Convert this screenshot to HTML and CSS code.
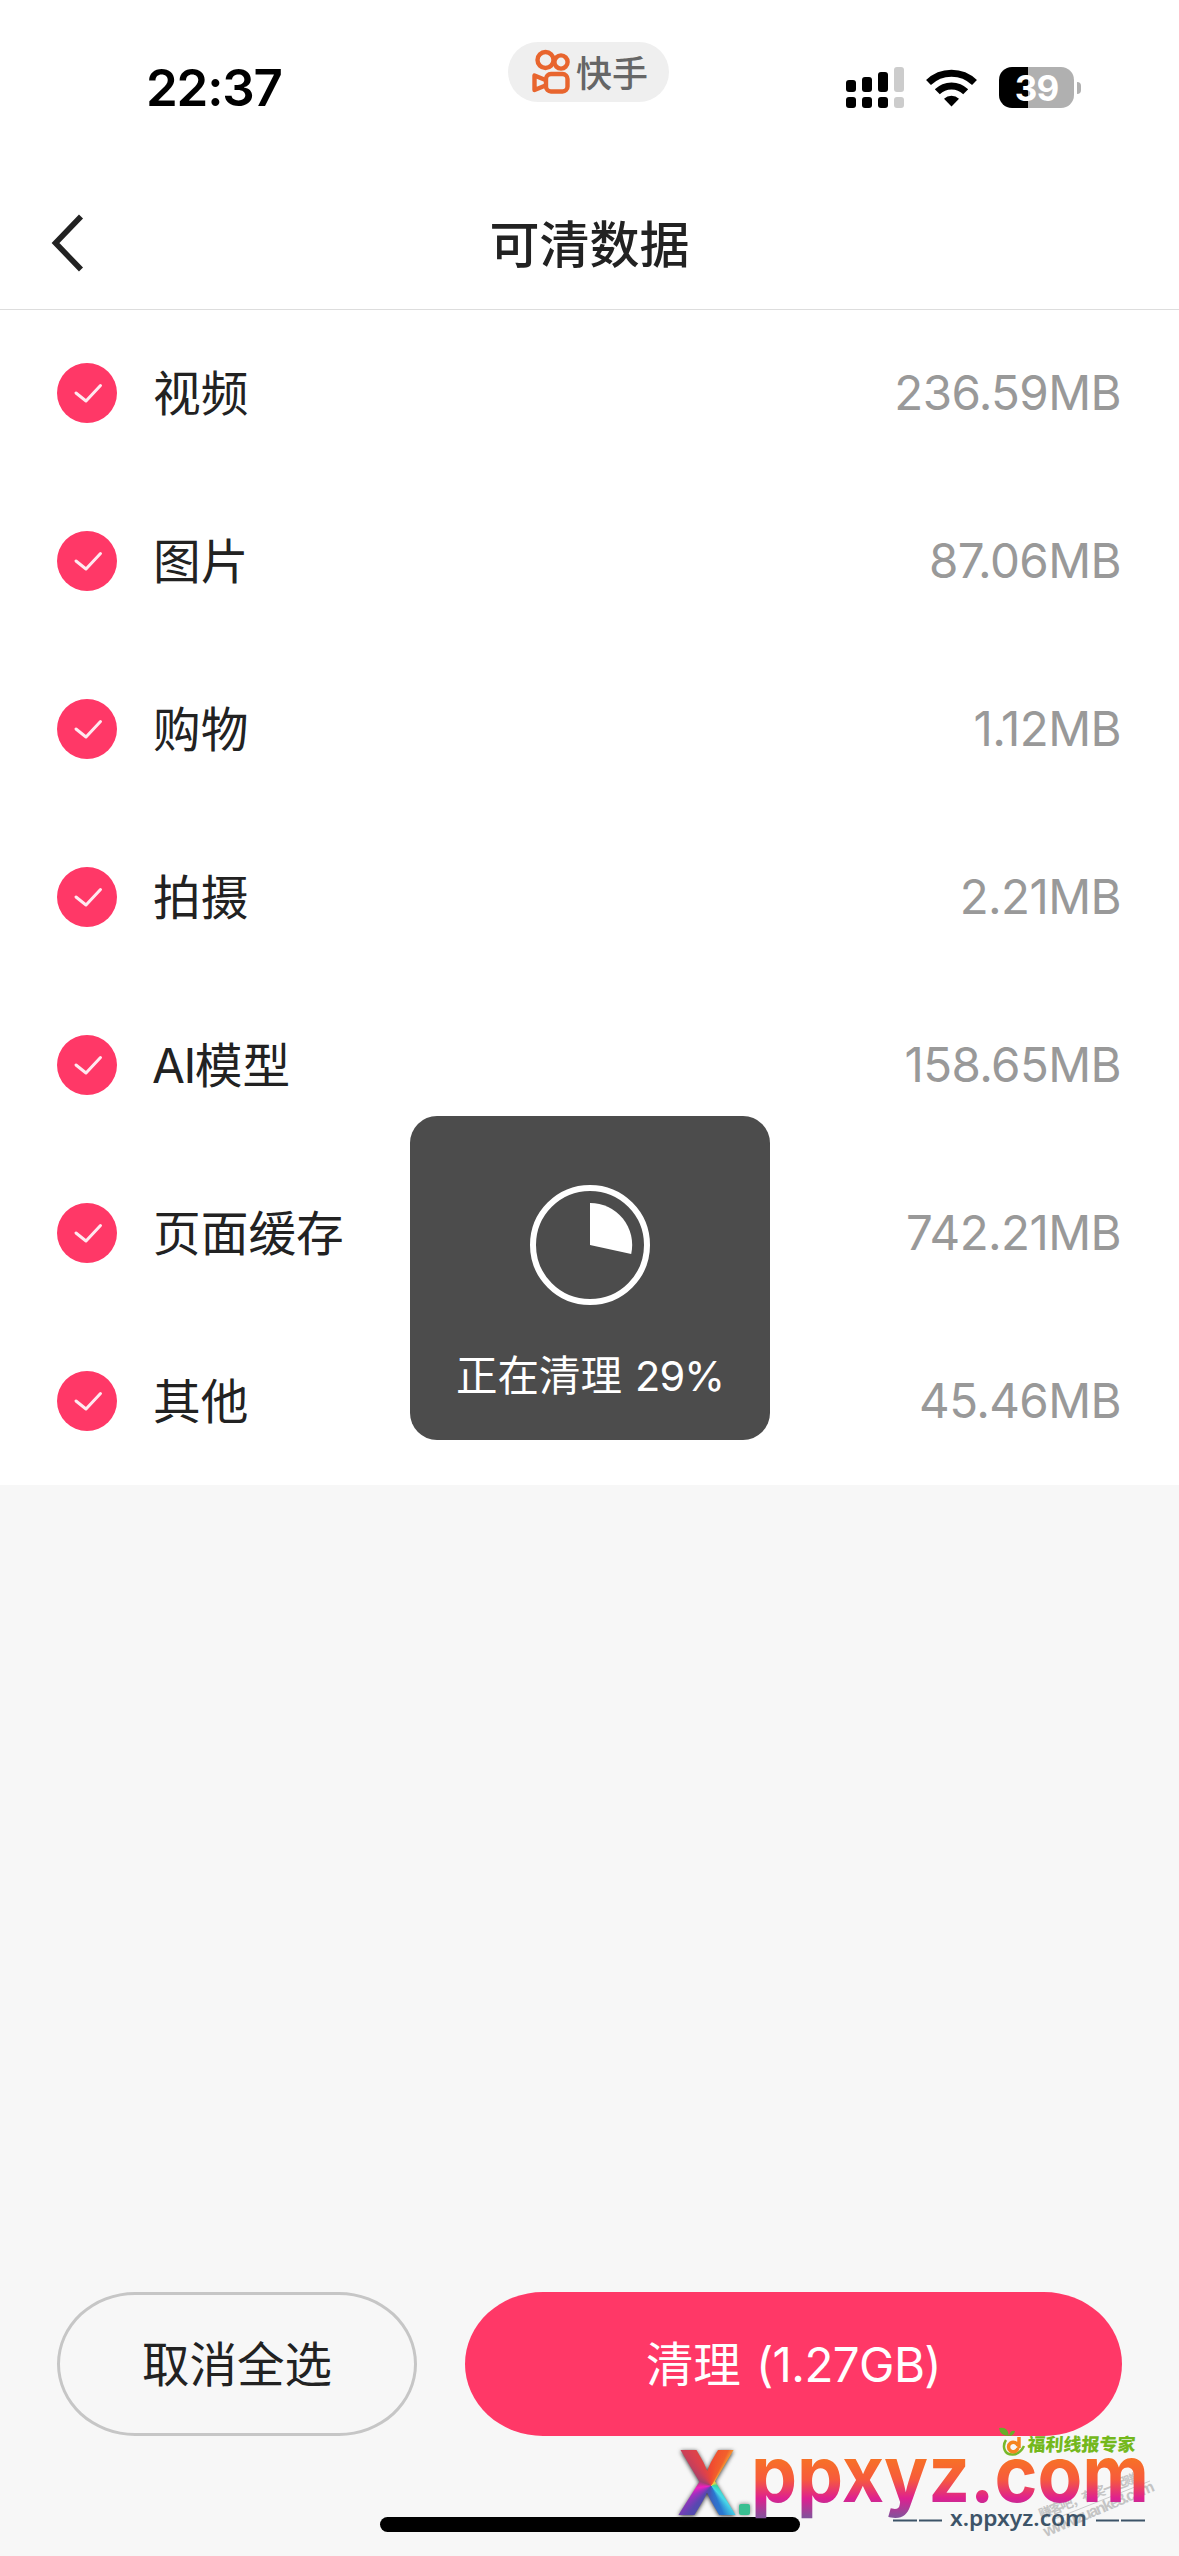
FILE: index.html
```html
<!DOCTYPE html>
<html lang="zh-CN">
<head>
<meta charset="utf-8">
<title>可清数据</title>
<link rel="stylesheet" href="styles.css">
</head>
<body>
<svg class="defs" width="0" height="0">
  <symbol id="check" viewBox="0 0 60 60"><circle cx="30" cy="30" r="30" fill="#ff3867"/><path d="M19 30 L29 38 L43.500 22.500" fill="none" stroke="#ffe9f0" stroke-width="3" stroke-linecap="round" stroke-linejoin="round"/></symbol>
</svg>
<div class="screen">
  <div class="status">
    <span class="time">22:37</span>
    <div class="pill">
      <svg class="pill-logo" width="40" height="46" viewBox="0 0 40 46" fill="none" stroke="#e8652e" stroke-width="4.400" stroke-linejoin="round">
        <circle cx="14.500" cy="11" r="8"/><circle cx="30" cy="13" r="6.600"/>
        <rect x="15" y="25" width="21.500" height="17.500" rx="5"/><path d="M14.500 31 L3.500 26.500 V41 L14.500 36.500"/>
      </svg>
      <span class="pill-text">快手</span>
    </div>
    <div class="indicators">
      <svg width="58" height="41" viewBox="0 0 58 41">
        <g fill="#000"><rect x="0" y="13" width="10" height="12" rx="3"/><rect x="16" y="10" width="10" height="15" rx="3"/><rect x="32" y="5" width="10" height="20" rx="3"/><rect x="0" y="30" width="10" height="11" rx="3"/><rect x="16" y="30" width="10" height="11" rx="3"/><rect x="32" y="30" width="10" height="11" rx="3"/></g>
        <g fill="#ccc"><rect x="48" y="0" width="10" height="25" rx="3"/><rect x="48" y="30" width="10" height="11" rx="3"/></g>
      </svg>
      <svg class="wifi" width="51" height="38" viewBox="0 0 51 38" fill="none" stroke="#000" stroke-width="7">
        <path d="M2.500 13.500 A33 33 0 0 1 48.500 13.500"/><path d="M11.300 22.800 A20 20 0 0 1 39.700 22.800"/>
        <path d="M25.500 37.500 L18 29.800 A11 11 0 0 1 33 29.800 Z" fill="#000" stroke="none"/>
      </svg>
      <div class="battery"><span class="battery-text">39</span></div>
      <i class="nub"></i>
    </div>
  </div>
  <div class="nav">
    <svg class="back" width="34" height="58" viewBox="0 0 34 58"><path d="M31 2.500 L5.500 29 L31 55.500" fill="none" stroke="#222" stroke-width="5.600"/></svg>
    <h1 class="title">可清数据</h1>
  </div>
  <div class="list">
    <div class="row"><svg class="check"><use href="#check"/></svg><span class="label">视频</span><span class="size">236.59MB</span></div>
    <div class="row"><svg class="check"><use href="#check"/></svg><span class="label">图片</span><span class="size">87.06MB</span></div>
    <div class="row"><svg class="check"><use href="#check"/></svg><span class="label">购物</span><span class="size">1.12MB</span></div>
    <div class="row"><svg class="check"><use href="#check"/></svg><span class="label">拍摄</span><span class="size">2.21MB</span></div>
    <div class="row"><svg class="check"><use href="#check"/></svg><span class="label"><span class="latin">AI</span>模型</span><span class="size">158.65MB</span></div>
    <div class="row"><svg class="check"><use href="#check"/></svg><span class="label">页面缓存</span><span class="size">742.21MB</span></div>
    <div class="row"><svg class="check"><use href="#check"/></svg><span class="label">其他</span><span class="size">45.46MB</span></div>
  </div>
  <div class="actions">
    <button class="btn cancel">取消全选</button>
    <button class="btn clean"><span>清理</span><span class="amount">(1.27GB)</span></button>
  </div>
  <div class="home"></div>

  <div class="toast">
    <svg width="120" height="120" viewBox="0 0 120 120"><circle cx="60" cy="60" r="57" fill="none" stroke="#fff" stroke-width="6"/><path d="M60 60 V18 A42 42 0 0 1 101.200 69 Z" fill="#fff"/></svg>
    <div class="toast-text"><span>正在清理</span><span class="percent">29%</span></div>
  </div>

  <div class="wm-x"><span class="wm-x-letter">X</span></div>
  <svg class="watermark" width="509" height="136" viewBox="670 2420 509 136">
    <defs>
      <linearGradient id="sunset" gradientUnits="userSpaceOnUse" x1="0" y1="2459" x2="0" y2="2517"><stop offset="0" stop-color="#f77126"/><stop offset=".35" stop-color="#f75b3c"/><stop offset=".68" stop-color="#de2090"/><stop offset="1" stop-color="#85519b"/></linearGradient>
    </defs>
    <g class="wm-gray">
      <text transform="translate(1041 2519) rotate(-21)" font-size="13" textLength="116">赚客吧，有奖一起赚！</text>
      <text transform="translate(1046 2537) rotate(-23)" font-size="16" textLength="119">www.zuanke8.com</text>
      <path d="M1052 2520 L1150 2481" stroke="#ccc"/>
    </g>
    <rect class="wm-dot" x="739" y="2504" width="11" height="11" rx="2" fill="#39bf91"/>
    <text class="wm-main" x="751" y="2502" font-size="78" textLength="398" lengthAdjust="spacingAndGlyphs" fill="url(#sunset)">ppxyz.com</text>
    <text class="wm-sub" x="950" y="2526" font-size="21" textLength="137" lengthAdjust="spacingAndGlyphs">x.ppxyz.com</text>
    <path d="M893 2520.500 H917 M919 2520.500 H942 M1096 2520.500 H1119 M1121 2520.500 H1145" stroke="#3d5468" stroke-width="1.800"/>
    <path d="M1006 2440 C1002 2446 1004 2455 1013 2454.500 C1019 2454 1022 2450 1024 2446" fill="none" stroke="#77b82a" stroke-width="2.500"/>
    <path d="M1019 2437 V2448 M1018 2446 A4.800 4.800 0 1 0 1018 2448" fill="none" stroke="#f5851f" stroke-width="3.500"/>
    <path d="M999 2428 Q1008 2426 1009 2436 Q1000 2436 999 2428 M1009 2436 Q1010 2430 1015 2431 Q1014 2436 1009 2436" fill="#67ad2b"/>
    <text class="wm-green" transform="translate(1027 2451) skewX(-4)" font-size="18" textLength="108">福利线报专家</text>
  </svg>
</div>
</body>
</html>
```
FILE: styles.css
```css
* { box-sizing: border-box; }
body { margin: 0; background: #f7f7f7; }
.defs { position: absolute; }
.screen {
  position: relative;
  display: flex;
  flex-direction: column;
  width: 1179px;
  height: 2556px;
  overflow: hidden;
  background: #f7f7f7;
  color: #222;
  font-family: Inter, "Noto Sans CJK SC", sans-serif;
}
.status {
  display: grid;
  grid-template-columns: 508px 161px 1fr;
  height: 180px;
  background: #fff;
}
.time {
  padding: 57px 0 0 146px;
  font-size: 51px;
  line-height: 62px;
  font-weight: 600;
  letter-spacing: -1.200px;
  color: #000;
}
.pill {
  display: flex;
  align-items: center;
  gap: 5px;
  height: 60px;
  margin-top: 42px;
  padding-left: 23px;
  border-radius: 30px;
  background: #efefef;
}
.pill-logo { flex: none; }
.pill-text { font: 500 36px/60px "Noto Sans CJK SC", sans-serif; color: #666; white-space: nowrap; margin-top: -2px; }
.indicators { display: flex; align-items: flex-start; padding: 67px 0 0 177px; }
.wifi { margin: 2px 22px 0 22px; }
.battery {
  width: 75px;
  height: 41px;
  border-radius: 13px;
  background: linear-gradient(90deg, #000 29px, #b0b0b0 29px);
  color: #fff;
  text-align: center;
}
.battery-text { font-size: 35px; line-height: 42px; font-weight: 700; letter-spacing: -1px; }
.nub { width: 4px; height: 12px; margin: 15px 0 0 3px; border-radius: 0 4px 4px 0; background: #b0b0b0; }
.nav {
  position: relative;
  z-index: 1;
  display: grid;
  grid-template-columns: 180px 1fr 180px;
  align-items: center;
  height: 129px;
  padding-bottom: 4px;
  background: #fff;
  box-shadow: 0 1px 0 #ddd;
}
.back { margin-left: 50px; }
.title { margin: -3px 0 0; font: 500 50px/72px "Noto Sans CJK SC", sans-serif; text-align: center; }
.list { background: #fff; }
.row { display: flex; align-items: center; height: 168px; padding: 0 58px 0 57px; }
.check { width: 60px; height: 60px; margin-right: 36px; }
.label { padding-top: 2px; font-size: 47.700px; line-height: 70px; }
.latin { margin-left: -1px; letter-spacing: -1.500px; }
.size { margin: -1px 0 0 auto; font-size: 47.500px; font-weight: 400; color: #999; letter-spacing: -.600px; }
.actions { display: flex; gap: 48px; margin-top: 807px; padding: 0 57px; }
.btn {
  display: flex;
  align-items: center;
  justify-content: center;
  height: 144px;
  padding: 2px 0 0;
  border: 0;
  border-radius: 78px / 72px;
  font: 400 47.500px/70px Inter, "Noto Sans CJK SC", sans-serif;
}
.cancel { width: 360px; border: 3px solid #c6c6c6; background: transparent; color: #222; }
.clean { flex: 1; gap: 15px; background: #ff3867; color: #fff; }
.amount { font-weight: 400; letter-spacing: -.600px; }
.home { width: 420px; height: 15px; margin: 81px auto 0; border-radius: 8px; background: #000; }
.toast {
  position: absolute;
  z-index: 2;
  left: 410px;
  top: 1116px;
  display: flex;
  flex-direction: column;
  align-items: center;
  width: 360px;
  height: 324px;
  padding-top: 69px;
  border-radius: 27px;
  background: #4c4c4c;
}
.toast-text { display: flex; gap: 13px; margin-top: 40px; font-size: 41.500px; line-height: 62px; color: #fff; }
.percent { letter-spacing: -1px; }
.watermark { position: absolute; left: 670px; top: 2420px; }
.wm-gray { fill: #c4c4c4; font-family: "Liberation Sans", "Noto Sans CJK SC", sans-serif; font-weight: 700; }
.wm-x { position: absolute; left: 673px; top: 2429px; filter: drop-shadow(0 1px 2px #333); }
.wm-x-letter {
  display: block;
  width: 68px;
  font: 800 89px/107px Inter, sans-serif;
  text-align: center;
  transform: scaleX(.9);
  color: transparent;
  background: conic-gradient(from 0deg at 57% 53%, #f04a30, #f2602c 28deg, #f8c83a 42deg, #c9d35a 60deg, #30d8a0 90deg, #48d8e8 135deg, #2a78d0 155deg, #4a50b0 200deg, #5848b0 222deg, #a030c0 245deg, #f020c0 262deg, #a04070 290deg, #d84050 325deg, #f04a30);
  -webkit-background-clip: text;
  background-clip: text;
}
.wm-dot { filter: drop-shadow(0 0 2px #777); }
.wm-main { font-family: Inter, sans-serif; font-weight: 700; }
.wm-sub { font-family: "Noto Sans", sans-serif; font-weight: 600; fill: #3d5468; }
.wm-green { font-family: "Noto Sans CJK SC", sans-serif; font-weight: 900; fill: #74b81c; }
```
